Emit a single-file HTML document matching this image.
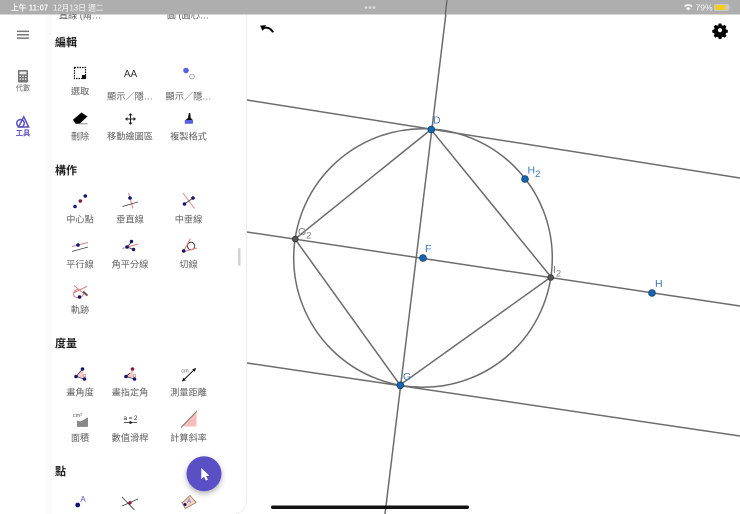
<!DOCTYPE html>
<html lang="zh-Hant">
<head>
<meta charset="utf-8">
<style>
html,body{margin:0;padding:0;width:740px;height:514px;overflow:hidden;background:#fff}
svg{display:block}
text{font-family:"Liberation Sans","Noto Sans CJK TC",sans-serif}
.l{font-size:9.2px;fill:#5f5f5f;text-anchor:middle}
.h{font-size:11px;font-weight:700;fill:#222}
.g{stroke:#6c6c6c;stroke-width:1.5;fill:none}
.p{font-size:10.500px;fill:#3f78bb}
.q{font-size:10.500px;fill:#808080}
.r{stroke:#e58080;stroke-width:1;fill:none}
.k{stroke:#444;stroke-width:.9;fill:none}
.bd{fill:#14146e}
</style>
</head>
<body>
<svg width="740" height="514" viewBox="0 0 740 514" xmlns="http://www.w3.org/2000/svg">
<rect width="740" height="514" fill="#fff"/>

<!-- side panels -->
<rect x="46" y="0" width="6" height="514" fill="#fafafa"/>
<path d="M246.500 0 V500 Q246.500 512 236 513.500" fill="none" stroke="#efefef" stroke-width="1"/>

<!-- geometry -->
<g class="g">
<line x1="247" y1="100" x2="740" y2="178"/>
<line x1="247" y1="232" x2="740" y2="306"/>
<line x1="247" y1="363" x2="740" y2="436"/>
<line x1="447" y1="5" x2="385" y2="514"/>
<circle cx="423" cy="258" r="129.3"/>
<polygon points="431,129.5 295,239 400,385 551,277"/>
</g>
<g fill="#1565b0" stroke="#0d3f72" stroke-width=".8">
<circle cx="431.300" cy="129.500" r="3.400"/>
<circle cx="525" cy="179" r="3.400"/>
<circle cx="423" cy="258" r="3.400"/>
<circle cx="652" cy="293" r="3.400"/>
<circle cx="400.300" cy="385.300" r="3.400"/>
</g>
<g fill="#555" stroke="#333" stroke-width=".8">
<circle cx="295.300" cy="239" r="2.900"/>
<circle cx="550.700" cy="277.500" r="2.900"/>
</g>
<text class="p" x="433" y="123.500">D</text>
<text class="p" x="527.500" y="173.500">H<tspan font-size="9.500" dy="3.500">2</tspan></text>
<text class="p" x="425" y="252">F</text>
<text class="p" x="655" y="287">H</text>
<text class="p" x="403" y="380">G</text>
<text class="q" x="298" y="235">G<tspan font-size="9.500" dy="3.500">2</tspan></text>
<text class="q" x="553" y="273">I<tspan font-size="9.500" dy="3.500">2</tspan></text>

<!-- undo -->
<path d="M262.500 30.500 L260.300 25.800 L265.800 25.300 L264.800 27 C268 26.400 271.700 27.800 273.800 32 L272.200 32.500 C270.400 29.400 267.500 28.300 265.500 28.500 L264.300 28.700Z" fill="#000" stroke="#000" stroke-width=".3"/>
<!-- gear -->
<path fill-rule="evenodd" d="M718.700 23.500h2.700l.4 1.800 1.200.5 1.600-1 1.900 1.900-1 1.600.5 1.200 1.800.4v2.700l-1.800.4-.5 1.200 1 1.600-1.900 1.900-1.600-1-1.200.5-.4 1.800h-2.700l-.4-1.800-1.200-.5-1.600 1-1.900-1.900 1-1.600-.5-1.200-1.800-.4v-2.700l1.800-.4.500-1.200-1-1.600 1.900-1.900 1.600 1 1.200-.5zM720 28.100a2.100 2.100 0 1 0 .01 0z" fill="#000"/>

<!-- rail -->
<g fill="#777">
<rect x="17" y="30.600" width="12" height="1.500"/>
<rect x="17" y="34" width="12" height="1.500"/>
<rect x="17" y="37.400" width="12" height="1.500"/>
</g>
<rect x="18" y="70" width="10" height="12.500" rx="1" fill="#737373"/>
<rect x="19.500" y="71.500" width="7" height="2.800" fill="#eee"/>
<g fill="#eee"><rect x="19.500" y="75.700" width="1.600" height="1.400"/><rect x="22.200" y="75.700" width="1.600" height="1.400"/><rect x="24.900" y="75.700" width="1.600" height="1.400"/><rect x="19.500" y="78.400" width="1.600" height="1.400"/><rect x="22.200" y="78.400" width="1.600" height="1.400"/><rect x="24.900" y="78.400" width="1.600" height="1.400"/></g>
<text x="23" y="90.500" font-size="7.200" fill="#666" text-anchor="middle">代數</text>
<g fill="none" stroke="#5a4fc4" stroke-width="1.500"><circle cx="20.500" cy="123.300" r="3.800"/><path d="M18.500 127 L23.800 116.800 L28.600 127Z"/></g>
<text x="23" y="135.500" font-size="7.200" fill="#5a4fc4" text-anchor="middle" font-weight="700">工具</text>

<!-- panel text -->
<text class="l" x="80" y="18.500">直線 (兩…</text>
<text class="l" x="188" y="18.500">圓 (圓心…</text>

<text class="h" x="55" y="46">編輯</text>
<text class="h" x="55" y="174">構作</text>
<text class="h" x="55" y="347">度量</text>
<text class="h" x="55" y="475">點</text>

<text class="l" x="80" y="94.500">選取</text>
<text class="l" x="130" y="99.500">顯示／隱…</text>
<text class="l" x="188.500" y="99.500">顯示／隱…</text>
<text class="l" x="80" y="139.500">刪除</text>
<text class="l" x="130" y="139.500">移動繪圖區</text>
<text class="l" x="188.500" y="139.500">複製格式</text>

<text class="l" x="80" y="222.500">中心點</text>
<text class="l" x="130" y="222.500">垂直線</text>
<text class="l" x="188.500" y="222.500">中垂線</text>
<text class="l" x="80" y="267.500">平行線</text>
<text class="l" x="130" y="267.500">角平分線</text>
<text class="l" x="188.500" y="267.500">切線</text>
<text class="l" x="80" y="313">軌跡</text>

<text class="l" x="80" y="395.500">畫角度</text>
<text class="l" x="130" y="395.500">畫指定角</text>
<text class="l" x="188.500" y="395.500">測量距離</text>
<text class="l" x="80" y="441">面積</text>
<text class="l" x="130" y="441">數值滑桿</text>
<text class="l" x="188.500" y="441">計算斜率</text>

<!-- 編輯 icons -->
<rect x="74.500" y="67.500" width="11" height="11" fill="none" stroke="#111" stroke-width="1.200" stroke-dasharray="1.500 1"/>
<rect x="82" y="75" width="4" height="4" fill="#111"/>
<text x="130.500" y="77" font-size="10" fill="#333" text-anchor="middle">AA</text>
<circle cx="186" cy="70.500" r="2.800" fill="#5560e8"/>
<circle cx="192" cy="76.500" r="2.400" fill="#fff" stroke="#999" stroke-width=".8"/>
<path d="M73 119.800 L81.500 112.500 L87.500 116.500 L79.500 123.800 L75.500 123.800Z" fill="#000"/>
<path d="M79 123.800 H87.500" stroke="#888" stroke-width="1"/>
<g stroke="#222" stroke-width="1" fill="#222"><path d="M130.500 114.500 V123.500 M126 119 H135" fill="none"/><path d="M130.500 113 l-2 2.400h4z M130.500 125 l-2-2.400h4z M125 119 l2.400-2v4z M136 119 l-2.400-2v4z" stroke="none"/></g>
<path d="M188.800 113 L190.200 113 L190.800 118 L192.800 120 L192.800 123 L184.800 123 L185.500 120 L188 118Z" fill="#111"/>
<path d="M184.800 120 L192.800 120 L192.800 123.800 L184.800 123.800Z" fill="#5560e8"/>

<!-- 構作 icons -->
<g>
<circle cx="75" cy="206.500" r="1.800" class="bd"/><circle cx="85.300" cy="196" r="1.800" class="bd"/><circle cx="80.300" cy="201" r="1.800" fill="#8c1c3c"/>
<line class="r" x1="128.500" y1="193" x2="133" y2="208.500"/><line class="k" x1="122.500" y1="206.500" x2="138" y2="202"/><circle cx="130" cy="198" r="1.800" class="bd"/>
<line class="r" x1="183" y1="193" x2="194.500" y2="208.500"/><line class="k" x1="184.500" y1="204" x2="193" y2="198"/><circle cx="184.500" cy="204" r="1.800" class="bd"/><circle cx="193" cy="198" r="1.800" class="bd"/>
<line class="r" x1="72" y1="246.500" x2="88" y2="242.500"/><line class="k" x1="72" y1="251.500" x2="88" y2="247"/><circle cx="78" cy="245" r="1.800" class="bd"/>
<line class="r" x1="122.500" y1="248.500" x2="138" y2="244"/><path class="k" d="M127 247 L131.500 242 M127 247 L133.500 249.500"/><circle cx="127" cy="247" r="1.800" class="bd"/><circle cx="131.500" cy="241.500" r="1.700" class="bd"/><circle cx="133.500" cy="249.500" r="1.700" class="bd"/>
<circle cx="191" cy="246" r="3.700" fill="none" stroke="#444" stroke-width="1"/><path class="r" d="M183 252 L190.500 238.500 M183 252 L197 248"/><circle cx="183.700" cy="251" r="1.800" class="bd"/>
<path class="r" d="M74 285.500 L87 296 M73 293 L87 286.500 M81 290 C74 287 71 296 76 297.500 C80 298.500 83 296 85 292"/><circle cx="79.500" cy="297" r="1.800" class="bd"/><path d="M83 291.500 L87.500 295.500" stroke="#555" stroke-width="1.800"/>
</g>

<!-- 度量 icons -->
<g>
<path d="M77 377 L82.500 369 L84 377.500Z" fill="#f8c7c7"/>
<path class="k" d="M76 376.500 L82.500 369 M76 376.500 L84.500 379"/>
<circle cx="76" cy="376.500" r="1.800" class="bd"/><circle cx="82.500" cy="369" r="1.800" class="bd"/><circle cx="84.500" cy="379" r="1.800" class="bd"/>
<text x="83" y="377" font-size="5.500" fill="#d66">α</text>
<path d="M127 377 L132.500 369 L134 377.500Z" fill="#f8c7c7"/>
<path class="k" d="M126 376.500 L130 373 M126 376.500 L134.500 379"/>
<circle cx="126" cy="376.500" r="1.800" class="bd"/><circle cx="132.500" cy="369" r="1.800" fill="#8c1c3c"/><circle cx="134.500" cy="379" r="1.800" class="bd"/>
<text x="133" y="377" font-size="5.500" fill="#d66">α</text>
<text x="185" y="372.500" font-size="5.500" fill="#555" text-anchor="middle">cm</text>
<path d="M182.500 381 L195.500 368.500" stroke="#111" stroke-width="1"/>
<path d="M182 381.500 l1.200-3.800 2.600 2.600z M196 368 l-1.200 3.800-2.600-2.600z" fill="#111"/>
<text x="77.500" y="417" font-size="5.500" fill="#555" text-anchor="middle">cm²</text>
<path d="M77.500 421 C81 423 84 420 87.500 418 L87.500 426.500 L77.500 426.500Z" fill="#8a8a8a" stroke="#666" stroke-width=".6"/>
<text x="130.500" y="420" font-size="6.200" fill="#222" text-anchor="middle">a = 2</text>
<line x1="124" y1="422.500" x2="137" y2="422.500" stroke="#333" stroke-width=".8"/><circle cx="130.500" cy="422.500" r="1.300" fill="#111"/>
<path d="M182 426.500 L196.500 411.500 L196.500 426.500Z" fill="#f9bcbc"/>
<path d="M181 427.500 L197 411" stroke="#777" stroke-width=".9"/>
</g>

<!-- 點 icons -->
<circle cx="77.700" cy="505" r="2.400" class="bd"/>
<text x="83" y="502" font-size="8" fill="#5a4fc4" text-anchor="middle">A</text>
<path class="k" d="M122 497 L134.500 510 M122 506 L138 499"/>
<circle cx="130" cy="502.800" r="1.700" fill="#8c1c3c"/>
<path d="M182 503 L190 495.500 L196 502.500 L185.500 508.500Z" fill="#f3d6c4" stroke="#a8806a" stroke-width=".9"/>
<circle cx="185" cy="504.500" r="1.500" class="bd"/>
<text x="189" y="503" font-size="6.500" fill="#5a4fc4" text-anchor="middle">A</text>

<!-- scrollbar -->
<rect x="238" y="248" width="2.500" height="18" rx="1.200" fill="#d2d2d2"/>

<!-- fab -->
<defs><filter id="s" x="-40%" y="-40%" width="180%" height="180%"><feDropShadow dx="0" dy="2.500" stdDeviation="3" flood-color="#000" flood-opacity=".3"/></filter></defs>
<circle cx="204" cy="473.700" r="17.500" fill="#5a4fc4" filter="url(#s)"/>
<path d="M201.300 468 L201.300 479.300 L204 476.800 L205.900 480.600 L207.900 479.600 L206.100 476 L209.300 475.600Z" fill="#fff"/>

<!-- status bar -->
<rect x="0" y="0" width="740" height="14.500" fill="#aeaeae"/>
<line x1="447" y1="0" x2="445.300" y2="14.500" stroke="#666" stroke-width="1.300"/>
<text x="11" y="10.500" font-size="7.800" fill="#f6f6f6" font-weight="700">上午 11:07</text>
<text x="53" y="10.500" font-size="7.800" fill="#f6f6f6">12月13日 週二</text>
<g fill="#dcdcdc"><circle cx="366" cy="7.500" r="1.300"/><circle cx="370" cy="7.500" r="1.300"/><circle cx="374" cy="7.500" r="1.300"/></g>
<path d="M684 6 C686.500 3.500 690 3.500 692.500 6 L691.400 7.100 C689.500 5.300 687 5.300 685.100 7.100Z M688.200 10.500 L686 8.200 C687.300 7 689.200 7 690.500 8.200Z" fill="#f6f6f6"/>
<text x="695.500" y="10.500" font-size="8.500" fill="#f6f6f6">79%</text>
<rect x="714" y="4" width="15" height="7" rx="2" fill="#c9c9c9"/>
<rect x="715" y="5" width="10.500" height="5" rx="1" fill="#f5cd1f"/>
<rect x="729.500" y="6" width="1" height="3" fill="#c9c9c9"/>

<!-- home indicator -->
<rect x="271" y="505.500" width="198" height="3.500" rx="1.700" fill="#111"/>
</svg>
</body>
</html>
